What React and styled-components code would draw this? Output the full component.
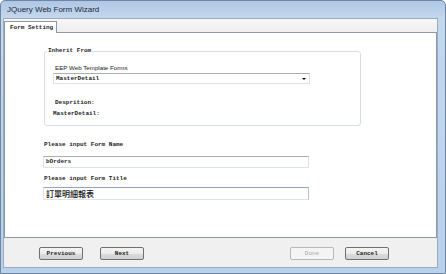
import React from 'react'
import styled, { createGlobalStyle } from 'styled-components'

const GlobalStyle = createGlobalStyle`
  html, body {
    margin: 0;
    padding: 0;
    background: #ffffff;
  }
  body {
    width: 446px;
    height: 274px;
    overflow: hidden;
  }
`

const monoText = `
  font-family: "Liberation Mono", "DejaVu Sans Mono", monospace;
  font-size: 6px;
  font-weight: bold;
  line-height: 8px;
  color: #1f1f1f;
  white-space: nowrap;
`

const Window = styled.div`
  width: 446px;
  height: 274px;
  box-sizing: border-box;
  display: flex;
  flex-direction: column;
  border: 1px solid #6f86a2;
  border-radius: 5px 5px 0 0;
  background: linear-gradient(to bottom, #aec7e4 0px, #c4d8ee 17px, #b9d1eb 100%);
  padding: 0 7px 5px 2px;
`

const TitleBar = styled.div`
  height: 17px;
  display: flex;
  align-items: center;
  padding-left: 4px;
  font-family: "Liberation Sans", Arial, sans-serif;
  font-size: 8px;
  color: #1c2838;
`

const Body = styled.div`
  flex: 1;
  display: flex;
  flex-direction: column;
  background: #f0f0f0;
  border: 1px solid #98abc0;
`

const TabStrip = styled.div`
  height: 13px;
  display: flex;
  align-items: flex-end;
  background: linear-gradient(to bottom, #f7f7f7, #eeeeee);
`

const Tab = styled.div`
  ${monoText}
  height: 12px;
  box-sizing: border-box;
  display: flex;
  align-items: center;
  padding: 0 4px 0 5px;
  width: 53px;
  background: #ffffff;
  border: 1px solid #8c99aa;
  border-bottom: none;
  margin-bottom: -1px;
  position: relative;
  z-index: 1;
`

const Panel = styled.div`
  flex: 1;
  display: flex;
  flex-direction: column;
  align-items: flex-start;
  background: #ffffff;
  border: 1px solid #8c99aa;
  padding-left: 39px;
`

const GroupBox = styled.fieldset`
  margin: 14px 0 0 0;
  width: 317px;
  box-sizing: border-box;
  border: 1px solid #d6dde4;
  border-radius: 3px;
  padding: 0 0 7px 8px;
  display: flex;
  flex-direction: column;
  align-items: flex-start;
`

const Legend = styled.legend`
  ${monoText}
  padding: 0 1px;
  margin-left: -6px;
`

const SansLabel = styled.div`
  font-family: "Liberation Sans", Arial, sans-serif;
  font-size: 6.2px;
  line-height: 8px;
  color: #222222;
  margin: 9px 0 0 2px;
`

const MonoLabel = styled.div`
  ${monoText}
  margin-top: ${p => p.$top}px;
  margin-left: ${p => p.$left || 0}px;
`

const Select = styled.div`
  ${monoText}
  margin-top: 1px;
  width: 257px;
  height: 11px;
  box-sizing: border-box;
  display: flex;
  align-items: center;
  justify-content: space-between;
  padding: 0 3px 0 2px;
  border: 1px solid #dfe3e8;
  border-top-color: #abadb3;
`

const Arrow = styled.span`
  width: 0;
  height: 0;
  border-left: 2px solid transparent;
  border-right: 2px solid transparent;
  border-top: 2px solid #000000;
`

const Field = styled.div`
  ${monoText}
  margin-top: ${p => p.$top}px;
  margin-left: -1px;
  width: 266px;
  height: ${p => p.$height}px;
  box-sizing: border-box;
  display: flex;
  align-items: center;
  padding-left: 2px;
  border: 1px solid #dde3ea;
  border-top-color: ${p => (p.$focused ? '#8fa7c0' : '#abadb3')};
  border-right-color: ${p => (p.$focused ? '#b3c4d6' : '#dde3ea')};
`

const CjkValue = styled.span`
  font-family: "Noto Sans CJK TC", "Noto Sans CJK SC", sans-serif;
  font-size: 8px;
  font-weight: 500;
  color: #111111;
`

const Footer = styled.div`
  height: 29px;
  box-sizing: border-box;
  display: flex;
  align-items: flex-start;
  padding: 9px 48px 0 35px;
`

const Button = styled.div`
  ${monoText}
  width: 44px;
  height: 13px;
  box-sizing: border-box;
  display: flex;
  align-items: center;
  justify-content: center;
  border: 1px solid ${p => (p.$disabled ? '#b5b9bd' : '#707070')};
  border-radius: 2px;
  background: ${p =>
    p.$disabled
      ? '#f4f4f4'
      : 'linear-gradient(to bottom, #f3f3f3 0%, #ebebeb 50%, #dddddd 51%, #cfcfcf 100%)'};
  color: ${p => (p.$disabled ? '#a5a5a5' : '#1f1f1f')};
  font-weight: ${p => (p.$disabled ? 'normal' : 'bold')};
  margin-left: ${p => p.$gap || 0}px;
`

const Spacer = styled.div`
  flex: 1;
`

export default function App() {
  return (
    <>
      <GlobalStyle />
      <Window>
        <TitleBar>JQuery Web Form Wizard</TitleBar>
        <Body>
          <TabStrip>
            <Tab>Form Setting</Tab>
          </TabStrip>
          <Panel>
            <GroupBox>
              <Legend>Inherit From</Legend>
              <SansLabel>EEP Web Template Forms</SansLabel>
              <Select>
                MasterDetail
                <Arrow />
              </Select>
              <MonoLabel $top={15} $left={2}>Desprition:</MonoLabel>
              <MonoLabel $top={3}>MasterDetail:</MonoLabel>
            </GroupBox>
            <MonoLabel $top={15}>Please input Form Name</MonoLabel>
            <Field $top={7} $height={12}>bOrders</Field>
            <MonoLabel $top={7}>Please input Form Title</MonoLabel>
            <Field $top={4} $height={13} $focused>
              <CjkValue>訂單明細報表</CjkValue>
            </Field>
          </Panel>
          <Footer>
            <Button>Previous</Button>
            <Button $gap={17}>Next</Button>
            <Spacer />
            <Button $disabled>Done</Button>
            <Button $gap={11}>Cancel</Button>
          </Footer>
        </Body>
      </Window>
    </>
  )
}
